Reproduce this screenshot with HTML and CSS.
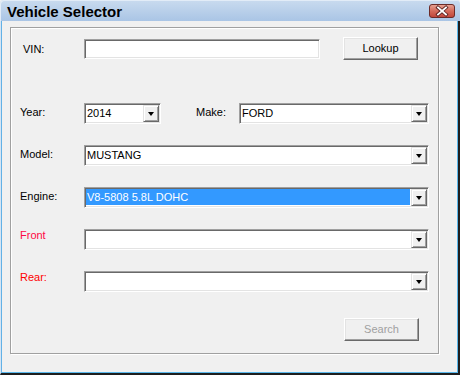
FILE: index.html
```html
<!DOCTYPE html>
<html lang="en">
<head>
    <meta charset="UTF-8">
    <title>Vehicle Selector</title>
    <link rel="stylesheet" href="styles.css">
</head>
<body>
    <div class="window">
        <div class="titlebar">
            <span class="title">Vehicle Selector</span>
            <button class="close-btn" aria-label="Close">
                <svg width="26" height="14" viewBox="0 0 26 14">
                    <defs>
                        <linearGradient id="closeGrad" x1="0" y1="0" x2="0" y2="1">
                            <stop offset="0" stop-color="#e7a596"/>
                            <stop offset="0.5" stop-color="#d46a5a"/>
                            <stop offset="1" stop-color="#c0453a"/>
                        </linearGradient>
                    </defs>
                    <rect x="0.5" y="0.5" width="25" height="13" rx="2.5" fill="url(#closeGrad)" stroke="#6b2b28"/>
                    <path d="M9 3.5 L17 10.5 M17 3.5 L9 10.5" stroke="#5a2220" stroke-width="3.6" stroke-linecap="square"/>
                    <path d="M9 3.5 L17 10.5 M17 3.5 L9 10.5" stroke="#ffffff" stroke-width="1.8" stroke-linecap="square"/>
                </svg>
            </button>
        </div>

        <div class="client">
            <div class="group">
                <div class="row row-vin">
                    <label class="label label-vin">VIN:</label>
                    <div class="textbox vin-box"></div>
                    <button class="btn lookup-btn">Lookup</button>
                </div>

                <div class="row row-year">
                    <label class="label">Year:</label>
                    <div class="combo year-combo">
                        <span class="combo-text">2014</span>
                        <span class="drop-btn"></span>
                    </div>
                    <label class="label make-label">Make:</label>
                    <div class="combo make-combo">
                        <span class="combo-text">FORD</span>
                        <span class="drop-btn"></span>
                    </div>
                </div>

                <div class="row">
                    <label class="label">Model:</label>
                    <div class="combo wide-combo">
                        <span class="combo-text">MUSTANG</span>
                        <span class="drop-btn"></span>
                    </div>
                </div>

                <div class="row">
                    <label class="label">Engine:</label>
                    <div class="combo wide-combo">
                        <span class="combo-text selected">V8-5808 5.8L DOHC</span>
                        <span class="drop-btn"></span>
                    </div>
                </div>

                <div class="row">
                    <label class="label label-high front">Front</label>
                    <div class="combo wide-combo">
                        <span class="combo-text"></span>
                        <span class="drop-btn"></span>
                    </div>
                </div>

                <div class="row">
                    <label class="label label-high rear">Rear:</label>
                    <div class="combo wide-combo">
                        <span class="combo-text"></span>
                        <span class="drop-btn"></span>
                    </div>
                </div>

                <div class="row row-search">
                    <button class="btn search-btn" disabled>Search</button>
                </div>
            </div>
        </div>
    </div>
</body>
</html>
```

FILE: styles.css
```css
body {
    margin: 0;
    background: #ffffff;
    font-family: 'Liberation Sans', Arial, sans-serif;
    font-size: 11px;
    color: #000;
}

.window {
    width: 460px;
    height: 375px;
    display: flex;
    flex-direction: column;
    background: #f0f0f0;
}

.titlebar {
    height: 21px;
    flex-shrink: 0;
    display: flex;
    align-items: center;
    justify-content: space-between;
    padding: 0 5px 0 7px;
    background: linear-gradient(#c9dbef, #aac5e5);
    border-radius: 4px 4px 0 0;
    box-shadow: inset 1px 1px 0 #e2ecf7;
}

.title {
    font-size: 15px;
    font-weight: bold;
    color: #000;
    padding-top: 2px;
}

.close-btn {
    width: 26px;
    height: 14px;
    padding: 0;
    border: none;
    background: none;
    margin-top: 1px;
    display: block;
}

.close-btn svg {
    display: block;
}

.client {
    flex: 1;
    border-left: 1px solid #d5e4f3;
    border-right: 2px solid #1e1e1e;
    border-bottom: 2px solid #1e1e1e;
    box-shadow: inset 1px 0 0 #62b1e6, inset -1px -1px 0 #5ab8ec;
    padding: 6px 0 0 9px;
}

.group {
    width: 429px;
    height: 327px;
    box-sizing: border-box;
    border: 1px solid #a0a0a0;
    box-shadow: 1px 1px 0 #fff, inset 1px 1px 0 #fff;
    padding: 9px 8px 0 9px;
}

.row {
    display: flex;
    align-items: flex-start;
    height: 21px;
    margin-top: 21px;
}

.row-vin {
    height: 23px;
    margin-top: 0;
}

.row-year {
    margin-top: 43px;
}

.row-search {
    height: 23px;
    margin-top: 26px;
    justify-content: flex-end;
    padding-right: 11px;
}

.label {
    width: 64px;
    flex-shrink: 0;
    line-height: 13px;
    padding-top: 3px;
}

.label-vin {
    padding-top: 6px;
    padding-left: 3px;
    width: 61px;
}

.label-high {
    padding-top: 0;
}

.front { color: #ff0844; }
.rear { color: #ff0000; }

.make-label {
    width: 43px;
    margin-left: 35px;
}

/* sunken controls */
.textbox,
.combo {
    box-sizing: border-box;
    background: #fff;
    border: 1px solid;
    border-color: #a0a0a0 #fff #fff #a0a0a0;
    box-shadow: inset 1px 1px 0 #696969, inset -1px -1px 0 #e3e3e3;
}

.vin-box {
    width: 236px;
    height: 20px;
    margin-top: 2px;
}

.combo {
    height: 21px;
    display: flex;
    padding: 1px 1px 2px 1px;
}

.year-combo { width: 77px; }
.make-combo { width: 190px; }
.wide-combo { width: 345px; }

.combo-text {
    flex: 1;
    display: flex;
    align-items: center;
    padding-left: 1px;
    white-space: nowrap;
}

.combo-text.selected {
    background: #3399ff;
    color: #fff;
    margin-right: 1px;
}

.drop-btn {
    width: 16px;
    height: 17px;
    box-sizing: border-box;
    background: #f0f0f0;
    border: 1px solid;
    border-color: #e3e3e3 #696969 #696969 #e3e3e3;
    box-shadow: inset 1px 1px 0 #fff, inset -1px -1px 0 #a0a0a0;
    display: flex;
    align-items: center;
    justify-content: center;
}

.drop-btn::after {
    content: '';
    width: 0;
    height: 0;
    border-left: 3.5px solid transparent;
    border-right: 3.5px solid transparent;
    border-top: 4px solid #000;
    margin-top: 1px;
}

/* raised buttons */
.btn {
    width: 75px;
    height: 23px;
    box-sizing: border-box;
    margin: 0;
    padding: 0 0 1px 0;
    font-family: inherit;
    font-size: 11px;
    color: #000;
    background: #f0f0f0;
    border: 1px solid;
    border-color: #fff #696969 #696969 #fff;
    box-shadow: inset -1px -1px 0 #a0a0a0, inset 1px 1px 0 #e3e3e3;
}

.lookup-btn {
    margin-left: 23px;
}

.search-btn {
    color: #a0a0a0;
}
```
